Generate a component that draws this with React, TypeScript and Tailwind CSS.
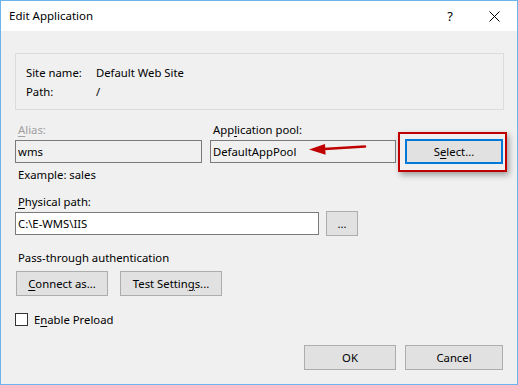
import React from "react";

const font = { fontFamily: '"Noto Sans", "Segoe UI", sans-serif' };

function Key({ children }: { children: React.ReactNode }) {
  return <span className="underline underline-offset-2">{children}</span>;
}

function Button({
  children,
  className = "",
}: {
  children: React.ReactNode;
  className?: string;
}) {
  return (
    <div
      className={
        "flex items-center justify-center h-[25px] bg-[#e1e1e1] border border-[#adadad] text-black " +
        className
      }
    >
      {children}
    </div>
  );
}

export default function App() {
  return (
    <div
      className="w-[518px] h-[385px] flex flex-col bg-[#f0f0f0] border border-[#6cb4ee] text-[11.3px] text-black leading-none"
      style={font}
    >
      {/* Title bar */}
      <div className="h-[30px] bg-white flex items-center pl-[8px] shrink-0">
        <span className="text-[11.5px]">Edit Application</span>
        <span className="ml-auto mr-[36px] text-[13px]">?</span>
        <svg width="11" height="11" viewBox="0 0 11 11" className="mr-[17px]">
          <path d="M0.5 0.5L10.5 10.5M10.5 0.5L0.5 10.5" stroke="#000" strokeWidth="1" />
        </svg>
      </div>

      <div className="flex flex-col pl-[14px] pr-[13px]">
        {/* Site info group */}
        <div className="mt-[22px] h-[57px] border border-[#dcdcdc] pl-[10px] pt-[9px] flex flex-col">
          <div className="flex h-[19px] items-center">
            <span className="w-[70px]">Site name:</span>
            <span>Default Web Site</span>
          </div>
          <div className="flex h-[19px] items-center">
            <span className="w-[70px]">Path:</span>
            <span>/</span>
          </div>
        </div>

        {/* Alias / Application pool */}
        <div className="flex mt-[12px] h-[16px] items-center">
          <span className="w-[195px] pl-[3px] text-[#a0a0a0]">
            <Key>A</Key>lias:
          </span>
          <span className="pl-[3px]">
            App<Key>l</Key>ication pool:
          </span>
        </div>
        <div className="flex items-center mt-[1px]">
          <div className="w-[187px] h-[23px] border border-[#7a7a7a] flex items-center pl-[2px]">
            wms
          </div>
          <div className="relative ml-[8px] w-[186px] h-[23px] border border-[#7a7a7a] flex items-center pl-[2px]">
            DefaultAppPool
            <svg
              width="60"
              height="14"
              viewBox="0 0 60 14"
              className="absolute left-[97px] top-[1px]"
            >
              <path d="M57 4.5L16 7" stroke="#c00000" strokeWidth="2.6" strokeLinecap="round" />
              <path d="M1 7.5L17 2L17.6 12.8Z" fill="#c00000" />
            </svg>
          </div>
          <div className="relative ml-[9px]">
            <div className="absolute -left-[7px] -top-[7px] -right-[4px] -bottom-[8px] border-2 border-[#c00000] shadow-[2px_3px_6px_rgba(0,0,0,0.35)]" />
            <Button className="w-[98px] !border-2 !border-[#0078d7] relative">
              S<Key>e</Key>lect...
            </Button>
          </div>
        </div>

        <div className="mt-[3px] h-[16px] flex items-center pl-[3px]">Example: sales</div>

        <div className="mt-[11px] h-[16px] flex items-center pl-[3px]">
          <Key>P</Key>hysical path:
        </div>
        <div className="flex items-center mt-[1px]">
          <div className="w-[304px] h-[23px] bg-white border border-[#7a7a7a] flex items-center pl-[2px]">
            C:\E-WMS\IIS
          </div>
          <Button className="ml-[7px] w-[32px]">...</Button>
        </div>

        <div className="mt-[14px] h-[16px] flex items-center pl-[3px]">
          Pass-through authentication
        </div>
        <div className="flex mt-[5px] pl-[1px] gap-[12px]">
          <Button className="w-[92px]">
            <Key>C</Key>onnect as...
          </Button>
          <Button className="w-[102px]">
            Test Settin<Key>g</Key>s...
          </Button>
        </div>

        <div className="flex items-center mt-[17px]">
          <div className="w-[13px] h-[13px] bg-white border border-[#333]" />
          <span className="ml-[6px]">
            E<Key>n</Key>able Preload
          </span>
        </div>

        <div className="flex justify-end mt-[19px] gap-[9px] pr-[1px]">
          <Button className="w-[92px]">OK</Button>
          <Button className="w-[98px]">Cancel</Button>
        </div>
      </div>
    </div>
  );
}
